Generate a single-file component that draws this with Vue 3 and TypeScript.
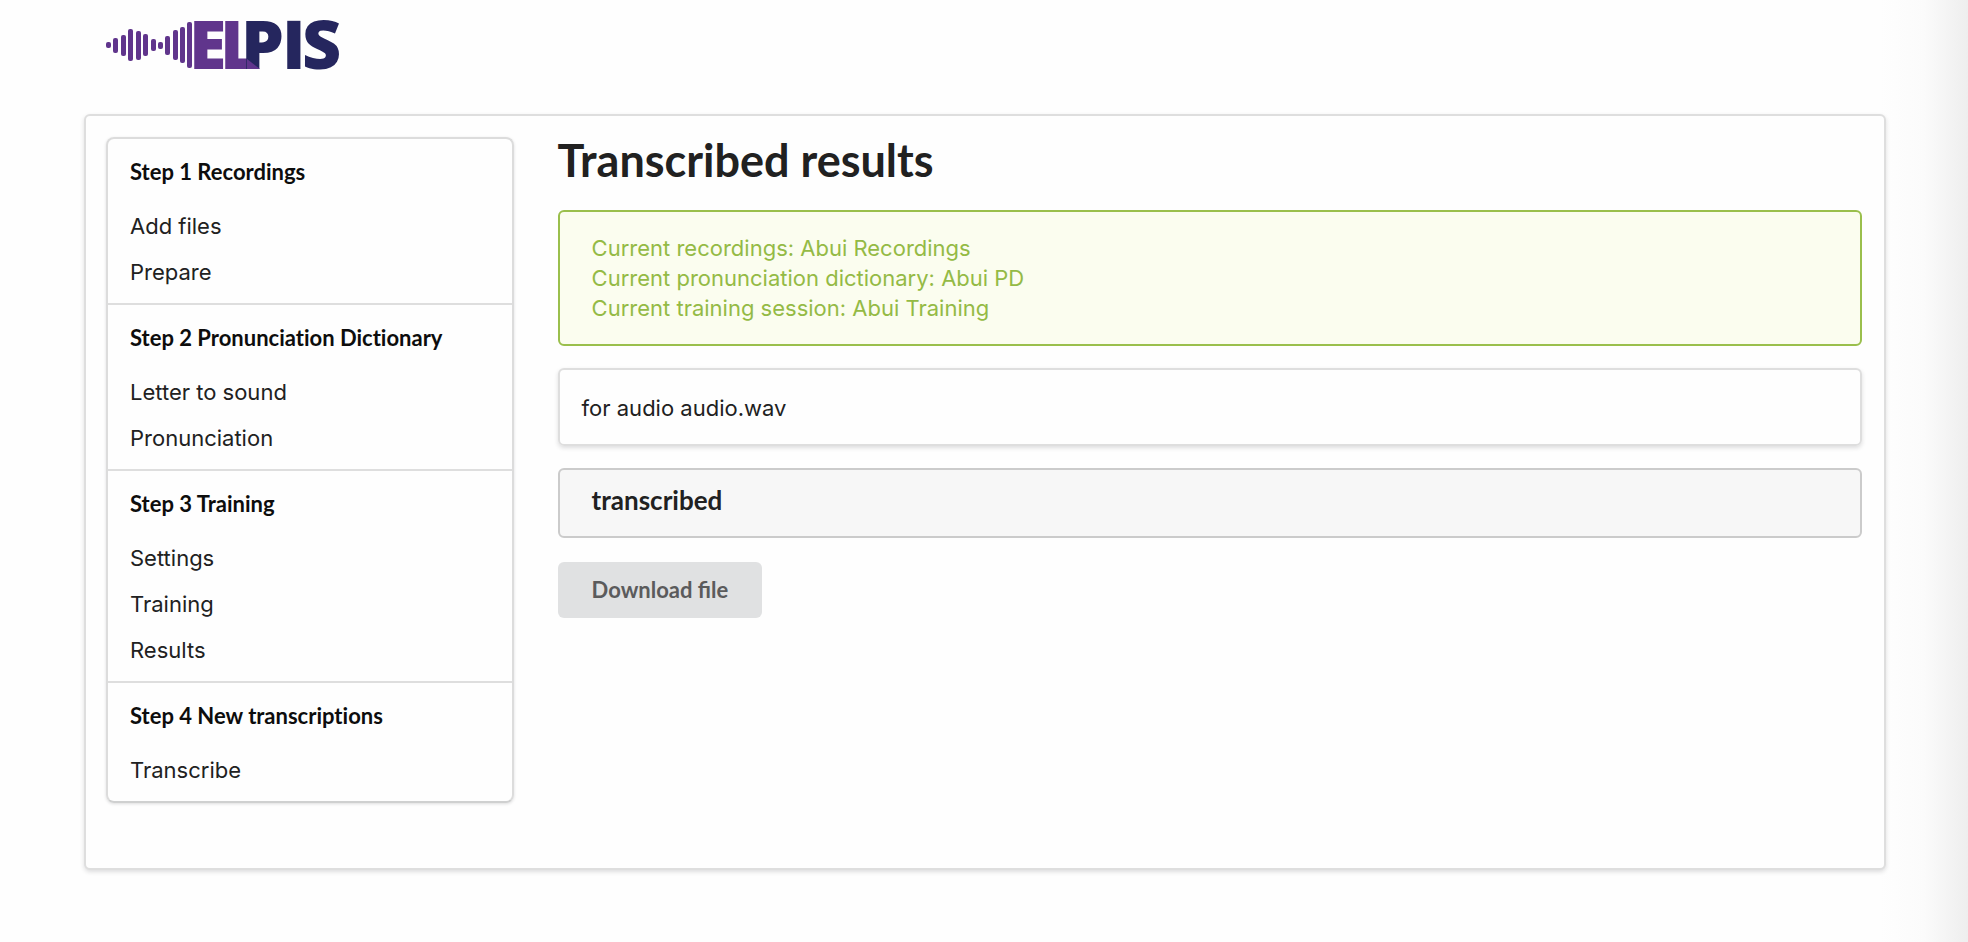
<script setup lang="ts">
interface Step {
  title: string
  links: string[]
}

const steps: Step[] = [
  { title: 'Step 1 Recordings', links: ['Add files', 'Prepare'] },
  { title: 'Step 2 Pronunciation Dictionary', links: ['Letter to sound', 'Pronunciation'] },
  { title: 'Step 3 Training', links: ['Settings', 'Training', 'Results'] },
  { title: 'Step 4 New transcriptions', links: ['Transcribe'] },
]

const status: string[] = [
  'Current recordings: Abui Recordings',
  'Current pronunciation dictionary: Abui PD',
  'Current training session: Abui Training',
]

// Waveform bars of the logo: left edge, top and height.
const bars: number[][] = [
  [0, 28, 6], [7, 24, 15], [15, 21, 21], [22, 15, 32], [30, 17, 29], [37, 20, 22],
  [45, 25, 12], [52, 28, 7], [59, 22, 19], [67, 16, 30], [74, 13, 36], [81, 8, 46],
]
</script>

<template>
  <div class="page">
    <header class="top">
      <a href="#" class="brand" aria-label="ELPIS">
        <svg width="240" height="60" viewBox="0 0 240 60">
          <rect v-for="b in bars" :key="b[0]" :x="b[0]" :y="b[1]" width="5" :height="b[2]" rx="2" fill="#60358c" />
          <text class="word" y="55"><tspan class="violet" x="83 114">EL</tspan><tspan class="navy" x="135 176 196">PIS</tspan></text>
          <path d="M141 45 L154 55 L141 55 Z" fill="#60358c" />
        </svg>
      </a>
    </header>

    <div class="segment">
      <nav class="menu">
        <section v-for="step in steps" :key="step.title" class="step">
          <h2>{{ step.title }}</h2>
          <ul>
            <li v-for="link in step.links" :key="link"><a href="#">{{ link }}</a></li>
          </ul>
        </section>
      </nav>

      <main class="content">
        <h1>Transcribed results</h1>
        <div class="box status">
          <p v-for="line in status" :key="line">{{ line }}</p>
        </div>
        <div class="box audio"><p>for audio audio.wav</p></div>
        <div class="box result"><h3>transcribed</h3></div>
        <button type="button">Download file</button>
      </main>
    </div>
  </div>
</template>

<style>
body {
  margin: 0;
}
</style>

<style scoped>
.page {
  box-sizing: border-box;
  min-height: 100vh;
  padding: 14px 82px 72px 84px;
  background: #fefefe linear-gradient(to right, #fefefe, #fbfbfb 50%, #eee) right / 88px 100% no-repeat;
  color: #212121;
  font-family: Inter, "Liberation Sans", sans-serif;
  font-size: 22px;
  line-height: 30px;
}
h1, h2, h3, p, ul {
  margin: 0;
  padding: 0;
}
ul {
  list-style: none;
}
a {
  color: inherit;
  text-decoration: none;
}
.top {
  padding: 0 22px 40px;
}
.brand,
.brand svg {
  display: block;
  width: 240px;
}
.word {
  font-family: "Open Sans", sans-serif;
  font-size: 68px;
  font-weight: 800;
}
.violet {
  fill: #60358c;
}
.navy {
  fill: #25265e;
}
.segment {
  display: grid;
  grid-template-columns: 5fr 16fr;
  gap: 44px;
  align-items: start;
  padding: 21px 22px 65px 20px;
  border: 2px solid #dedede;
  border-radius: 6px;
  background: #fefefe;
  box-shadow: 0 2px 4px rgba(34, 36, 38, 0.15);
}
.menu {
  border: 2px solid #dcdcdc;
  border-bottom-color: #cfd0d0;
  border-radius: 8px;
  box-shadow: 0 1px 3px rgba(34, 36, 38, 0.15);
}
.step {
  padding: 19px 22px 8px;
}
.step + .step {
  border-top: 2px solid #dedede;
}
.step h2 {
  margin-bottom: 17px;
  color: #0d0d0d;
  font: 700 22px/28px Lato, sans-serif;
  font-variant-ligatures: none;
}
.step li {
  line-height: 46px;
}
.content {
  display: flex;
  flex-direction: column;
  align-items: stretch;
}
h1 {
  margin-bottom: 27px;
  font: 700 45px/46px Lato, sans-serif;
}
.box {
  margin-bottom: 22px;
  padding: 22px;
  border: 2px solid #dedede;
  border-radius: 6px;
}
.status {
  padding: 21px 32px;
  border-color: #9abf4c;
  background: #fbfdef;
  color: #94ba45;
}
.audio {
  padding: 23px 22px 21px;
  box-shadow: 0 2px 4px rgba(34, 36, 38, 0.15);
}
.result {
  margin-bottom: 24px;
  padding: 14px 32px 20px;
  border-color: #cbcbcb;
  background: #f7f7f7;
}
h3 {
  font: 700 26px/32px Lato, sans-serif;
}
button {
  align-self: flex-start;
  padding: 14px 34px;
  border: 0;
  border-radius: 6px;
  background: #e0e1e2;
  color: #5b5b5c;
  font: 700 22px/28px Lato, sans-serif;
}
</style>
